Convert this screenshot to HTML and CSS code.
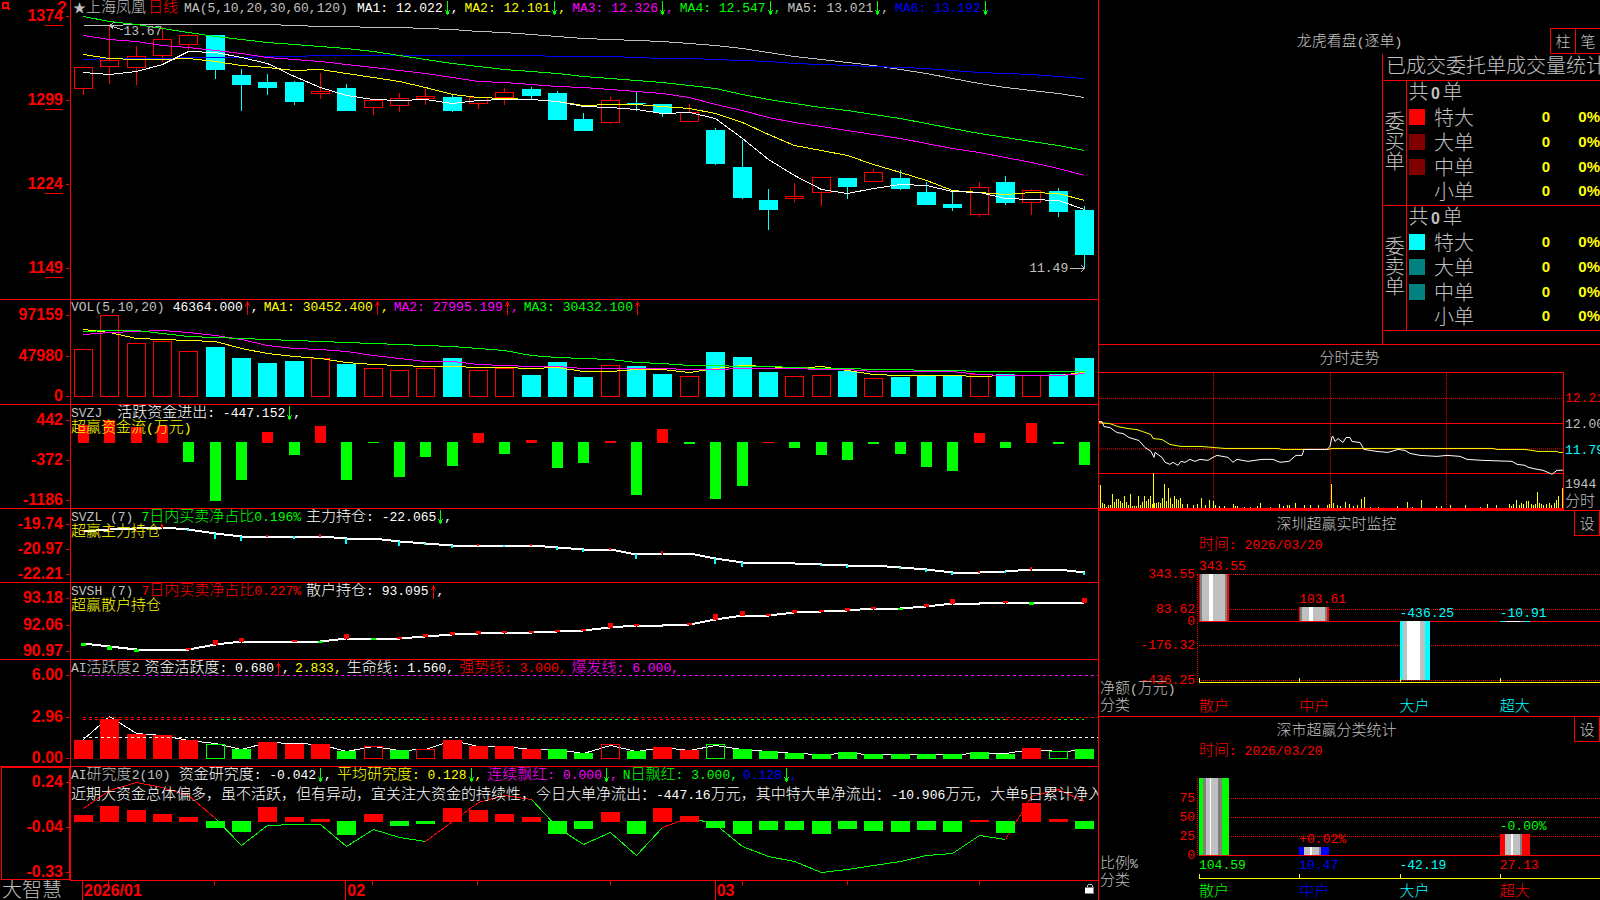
FILE: index.html
```
<!DOCTYPE html>
<html lang="zh-CN">
<head>
	<meta charset="UTF-8">
	<title>上海凤凰 日线 - 大智慧</title>
	<link rel="stylesheet" href="styles.css">
</head>
<body>
	<svg class="defs" width="0" height="0">
		<symbol id="down" viewBox="0 0 8 16"><path d="M4 0h1v14h-1zM3 10h3v1h-3zM2 9h1v1h-1zM6 9h1v1h-1zM3 11h3v2h-3z" fill="#0f0"/></symbol>
		<symbol id="up" viewBox="0 0 8 16"><path d="M4 1h1v14h-1zM3 3h3v2h-3zM2 5h1v1h-1zM6 5h1v1h-1z" fill="#f00"/></symbol>
	</svg>

	<main class="left">
		<section class="panel kline">
			<div class="axis">
				<svg class="mark" viewBox="0 0 8 8"><path d="M0 0h7v6h1v2h-2v-1h-6zM2 2v3h3v-3z" fill="#f00" fill-rule="evenodd"/></svg>
				<b class="ask">?</b>
				<span>13<u>74</u></span><span>12<u>99</u></span><span>12<u>24</u></span><span>11<u>49</u></span>
			</div>
			<div class="plot" id="kline">
				<div class="legend first">
					<span class="s"><i class="star">★</i><i>上海凤凰</i></span><span class="r period"><i>日线</i></span>
					<span class="s name">MA(5,10,20,30,60,120)</span>
					<span class="w">MA1: 12.022<svg><use href="#down"/></svg>,</span>
					<span class="y">MA2: 12.101<svg><use href="#down"/></svg>,</span>
					<span class="m">MA3: 12.326<svg><use href="#down"/></svg>,</span>
					<span class="g">MA4: 12.547<svg><use href="#down"/></svg>,</span>
					<span class="s">MA5: 13.021<svg><use href="#down"/></svg>,</span>
					<span class="b">MA6: 13.192<svg><use href="#down"/></svg></span>
				</div>
				<span class="note high">13.67</span>
				<span class="note low">11.49</span>
			</div>
		</section>

		<section class="panel">
			<div class="axis"><span>97159</span><span>47980</span><span>0</span></div>
			<div class="plot" id="vol">
				<div class="legend">
					<span class="s name">VOL(5,10,20)</span>
					<span class="w">46364.000<svg><use href="#up"/></svg>,</span>
					<span class="y">MA1: 30452.400<svg><use href="#up"/></svg>,</span>
					<span class="m">MA2: 27995.199<svg><use href="#up"/></svg>,</span>
					<span class="g">MA3: 30432.100<svg><use href="#up"/></svg></span>
				</div>
			</div>
		</section>

		<section class="panel">
			<div class="axis"><span>442</span><span>-372</span><span>-1186</span></div>
			<div class="plot" id="svzj">
				<div class="legend">
					<span class="s name wide">SVZJ</span>
					<span class="w"><i>活跃资金进出</i>: -447.152<svg><use href="#down"/></svg>,</span>
				</div>
				<div class="sub y"><i>超赢资金流</i>(<i>万元</i>)</div>
			</div>
		</section>

		<section class="panel">
			<div class="axis"><span>-19.74</span><span>-20.97</span><span>-22.21</span></div>
			<div class="plot" id="svzl">
				<div class="legend">
					<span class="s name">SVZL (7)</span>
					<span class="g">7<i>日内买卖净占比</i>0.196%</span>
					<span class="w"><i>主力持仓</i>: -22.065<svg><use href="#down"/></svg>,</span>
				</div>
				<div class="sub y"><i>超赢主力持仓</i></div>
			</div>
		</section>

		<section class="panel">
			<div class="axis"><span>93.18</span><span>92.06</span><span>90.97</span></div>
			<div class="plot" id="svsh">
				<div class="legend">
					<span class="s name">SVSH (7)</span>
					<span class="r">7<i>日内买卖净占比</i>0.227%</span>
					<span class="w"><i>散户持仓</i>: 93.095<svg><use href="#up"/></svg>,</span>
				</div>
				<div class="sub y"><i>超赢散户持仓</i></div>
			</div>
		</section>

		<section class="panel">
			<div class="axis"><span>6.00</span><span>2.96</span><span>0.00</span></div>
			<div class="plot" id="active">
				<div class="legend">
					<span class="s">AI<i>活跃度</i>2</span>
					<span class="w"><i>资金活跃度</i>: 0.680<svg><use href="#up"/></svg>,</span>
					<span class="y">2.833,</span>
					<span class="w"><i>生命线</i>: 1.560,</span>
					<span class="r"><i>强势线</i>: 3.000,</span>
					<span class="m"><i>爆发线</i>: 6.000,</span>
				</div>
			</div>
		</section>

		<section class="panel">
			<div class="axis current"><span>0.24</span><span>-0.04</span><span>-0.33</span></div>
			<div class="plot" id="study">
				<div class="legend">
					<span class="s name">AI<i>研究度</i>2(10)</span>
					<span class="w"><i>资金研究度</i>: -0.042<svg><use href="#down"/></svg>,</span>
					<span class="y"><i>平均研究度</i>: 0.128<svg><use href="#down"/></svg>,</span>
					<span class="m"><i>连续飘红</i>: 0.000<svg><use href="#down"/></svg>,</span>
					<span class="g">N<i>日飘红</i>: 3.000,</span>
					<span class="b">0.128<svg><use href="#down"/></svg>,</span>
				</div>
				<div class="message w"><i>近期大资金总体偏多，虽不活跃，但有异动，宜关注大资金的持续性，今日大单净流出：</i>-447.16<i>万元，其中特大单净流出：</i>-10.906<i>万元，大单</i>5<i>日累计净入</i></div>
			</div>
		</section>

		<footer class="dates">
			<div class="brand">大智慧</div>
			<div class="plot" id="dates">
				<svg class="lock" viewBox="0 0 10 12"><path d="M2 4v-2h1v-1h4v1h1v2h-1v-2h-4v2z" fill="#c0c0c0"/><path d="M0 5h8v5h-8z" fill="#fff"/><path d="M0 4h9v7h-9v-1h8v-5h-8z" fill="#808080"/></svg>
			</div>
		</footer>
	</main>

	<aside class="right">
		<section class="box orders">
			<h2>龙虎看盘<em>(</em>逐单<em>)</em></h2>
			<div class="tools"><button type="button">柱</button><button type="button">笔</button></div>
			<div class="stats">
				<h3>已成交委托单成交量统计</h3>
				<table>
					<tbody>
						<tr><th rowspan="5" class="side">委买单</th><td colspan="4" class="total">共<b>0</b>单</td></tr>
						<tr><td class="sw"><span class="c1"></span></td><td>特大</td><td class="num">0</td><td class="num">0%</td></tr>
						<tr><td class="sw"><span class="c2"></span></td><td>大单</td><td class="num">0</td><td class="num">0%</td></tr>
						<tr><td class="sw"><span class="c2"></span></td><td>中单</td><td class="num">0</td><td class="num">0%</td></tr>
						<tr><td class="sw"></td><td>小单</td><td class="num">0</td><td class="num">0%</td></tr>
					</tbody>
					<tbody>
						<tr><th rowspan="5" class="side">委卖单</th><td colspan="4" class="total">共<b>0</b>单</td></tr>
						<tr><td class="sw"><span class="c3"></span></td><td>特大</td><td class="num">0</td><td class="num">0%</td></tr>
						<tr><td class="sw"><span class="c4"></span></td><td>大单</td><td class="num">0</td><td class="num">0%</td></tr>
						<tr><td class="sw"><span class="c4"></span></td><td>中单</td><td class="num">0</td><td class="num">0%</td></tr>
						<tr><td class="sw"></td><td>小单</td><td class="num">0</td><td class="num">0%</td></tr>
					</tbody>
				</table>
			</div>
		</section>

		<section class="box intraday">
			<h2>分时走势</h2>
			<div class="trend">
				<div class="plot" id="trend"></div>
				<div class="prices">
					<span class="r">12.21</span><span class="s">12.00</span><span class="c">11.79</span>
					<span class="s last">1944</span><span class="s"><i>分时</i></span>
				</div>
			</div>
		</section>

		<section class="box monitor">
			<header><h2>深圳超赢实时监控</h2><button type="button">设</button></header>
			<p class="time"><i>时间</i>: 2026/03/20</p>
			<div class="chart" id="monitor"></div>
			<div class="foot">
				<div class="labels"><i>净额</i>(<i>万元</i>)<br><i>分类</i></div>
				<ul class="cats">
					<li class="r">散户</li><li class="r">中户</li><li class="c">大户</li><li class="c">超大</li>
				</ul>
			</div>
		</section>

		<section class="box ratio">
			<header><h2>深市超赢分类统计</h2><button type="button">设</button></header>
			<p class="time"><i>时间</i>: 2026/03/20</p>
			<div class="chart" id="ratio"></div>
			<div class="foot">
				<div class="labels"><i>比例</i>%<br><i>分类</i></div>
				<div class="rows">
					<ul class="values">
						<li class="g">104.59</li><li class="b">10.47</li><li class="c">-42.19</li><li class="r">27.13</li>
					</ul>
					<ul class="cats">
						<li class="g">散户</li><li class="b">中户</li><li class="c">大户</li><li class="r">超大</li>
					</ul>
				</div>
			</div>
		</section>
	</aside>
	<script src="script.js"></script>
</body>
</html>
```
FILE: styles.css
```
*{margin:0;padding:0;box-sizing:border-box;}
html,body{height:100%;}
body{
	display:grid;
	grid-template-columns:1099fr 501fr;
	min-height:600px;
	overflow:hidden;
	background:#000;
	color:#c0c0c0;
	font:13px/16px "Liberation Mono","Noto Sans CJK SC",monospace;
}
i{
	font-family:"Noto Sans CJK SC",sans-serif;
	font-size:15px;
	line-height:12px;
	font-style:normal;
	font-weight:300;
}
h2,h3{font-weight:300;font-family:"Noto Sans CJK SC",sans-serif;}
h2{height:26px;font-size:15px;line-height:24px;text-align:center;}
em{font-style:normal;font-size:13px;line-height:1;font-family:"Liberation Mono",monospace;}
ul{list-style:none;}
button{
	width:26px;
	height:26px;
	background:#000;
	border:1px solid #f00;
	color:#c0c0c0;
	font:300 15px/20px "Noto Sans CJK SC",sans-serif;
}
.defs{position:absolute;}
.w{color:#fff;}
.y{color:#ff0;}
.m{color:#f0f;}
.g{color:#0f0;}
.b{color:#00f;}
.r{color:#f00;}
.c{color:#0ff;}
.s{color:#c0c0c0;}

/* left column */
.left{
	display:grid;
	grid-template-columns:minmax(0,1fr);
	grid-template-rows:299fr 105fr 104fr 74fr 77fr 107fr 114fr 20fr;
	min-width:0;
	min-height:0;
	border-right:1px solid #f00;
}
.panel{
	display:flex;
	min-height:0;
	border-top:1px solid #f00;
}
.kline{border-top:0;}
.axis{
	position:relative;
	display:flex;
	flex-direction:column;
	justify-content:space-between;
	flex:none;
	width:71px;
	padding-top:7px;
	padding-right:7px;
	border-right:1px solid #f00;
	color:#f00;
	font:bold 16px/16px "Liberation Sans",sans-serif;
	text-align:right;
}
.kline .axis{padding-top:8px;padding-bottom:23px;}
.axis span{position:relative;}
.axis span:after{
	content:"";
	position:absolute;
	right:-6px;
	top:8px;
	width:3px;
	height:1px;
	background:#f00;
}
.axis u{
	display:inline-block;
	height:18px;
	text-decoration:none;
	border-bottom:1px solid #f00;
}
.kline .axis span{height:16px;}
.current:before{
	content:"";
	position:absolute;
	left:1px;
	right:0;
	top:0;
	bottom:0;
	border:1px solid #f00;
}
.mark{position:absolute;left:2px;top:2px;width:8px;height:8px;}
.ask{position:absolute;left:57px;top:0;}
.plot{
	position:relative;
	flex:1;
	min-width:0;
	overflow:hidden;
}
.draw{
	position:absolute;
	left:0;
	top:0;
	width:100%;
	height:100%;
	shape-rendering:crispEdges;
}
.legend{
	position:relative;
	display:flex;
	align-items:baseline;
	gap:5px;
	height:15px;
	white-space:pre;
}
.first{gap:6px;height:16px;padding-left:2px;}
.legend svg{width:8px;height:16px;vertical-align:bottom;}
.star{font-size:13px;}
.period{margin-left:-4px;}
.name{margin-right:3px;}
.wide{margin-right:10px;}
.sub,.message{
	position:relative;
	height:16px;
	white-space:nowrap;
}
.message{margin-top:5px;}
.note{position:absolute;}
.high{left:5.1%;top:8%;}
.low{right:2.9%;top:87.4%;}
.dates{
	display:flex;
	min-height:0;
	color:#f00;
	font:bold 16px/20px "Liberation Sans",sans-serif;
}
.dates .plot{border-top:1px solid #f00;}
.dates .plot span{position:absolute;top:0;}
.brand{
	flex:none;
	width:70px;
	padding-left:2px;
	color:#c0c0c0;
	font:300 20px/18px "Noto Sans CJK SC",sans-serif;
}
.lock{position:absolute;right:3px;top:2px;width:10px;height:12px;}

/* right column */
.right{
	display:grid;
	grid-template-columns:minmax(0,1fr);
	grid-template-rows:344fr 166fr 206fr 184fr;
	min-width:0;
	min-height:0;
	overflow:hidden;
}
.box{
	position:relative;
	display:flex;
	flex-direction:column;
	min-width:0;
	min-height:0;
	overflow:hidden;
	border-top:1px solid #f00;
}
.orders{border-top:0;padding-top:28px;}
.tools{position:absolute;right:-1px;top:28px;display:flex;}
.tools button + button{margin-left:-1px;}
.stats{
	flex:1;
	align-self:flex-end;
	width:218px;
	padding-left:1px;
	border-left:1px solid #f00;
}
h3{
	height:26px;
	padding-left:2px;
	font-size:20px;
	line-height:22px;
	white-space:nowrap;
}
table{
	width:100%;
	border-collapse:collapse;
	font:300 20px/20px "Noto Sans CJK SC",sans-serif;
}
tbody{border-top:1px solid #f00;border-bottom:1px solid #f00;}
td{height:25px;padding-bottom:3px;line-height:20px;white-space:nowrap;}
.side{
	width:22px;
	padding-bottom:4px;
	border-right:1px solid #f00;
	font-weight:300;
	text-align:center;
	white-space:normal;
}
.total{padding-left:2px;}
.total b{
	display:inline-block;
	width:14px;
	font:bold 16px/16px "Liberation Sans",sans-serif;
	text-align:center;
}
.sw{width:28px;padding-left:2px;}
.sw span{display:block;width:16px;height:16px;}
.c1{background:#f00;}
.c2{background:#800000;}
.c3{background:#0ff;}
.c4{background:#008080;}
.num{
	width:50px;
	color:#ff0;
	font:bold 15px/20px "Liberation Sans",sans-serif;
	text-align:right;
}
.trend{
	display:flex;
	flex:1;
	min-height:0;
}
.intraday h2{height:27px;}
.trend .plot{border:1px solid #f00;border-left:0;border-bottom-width:2px;}
.prices{
	display:flex;
	flex-direction:column;
	gap:10px;
	width:36px;
	padding:19px 0 0 1px;
	overflow:hidden;
}
.prices .last{margin:8px 0 -9px;}
.box header{display:flex;}
.box header h2{flex:1;}
.box header button{margin:-1px 0;}
.time{
	flex:none;
	height:37px;
	padding-left:100px;
	color:#f00;
}
.chart{
	position:relative;
	flex:1;
	display:grid;
	grid-template-columns:repeat(4,1fr);
	min-height:0;
	margin-left:100px;
	border-bottom:1px solid #ff0;
}
.chart:before{
	content:"";
	position:absolute;
	left:-2px;
	top:0;
	height:100%;
	border-left:1px dotted #f00;
}
.grid{
	position:absolute;
	left:0;
	right:0;
	border-top:1px dotted #f00;
}
.zero{border-top-style:solid;}
.tick{
	position:absolute;
	right:100%;
	margin:-7px 4px 0 0;
	color:#f00;
}
.slot{position:relative;}
.bar{position:absolute;left:0;width:30px;}
.value{position:absolute;left:0;margin-top:-15px;}
.foot{display:flex;flex:none;}
.labels{
	flex:none;
	width:100px;
	padding-left:1px;
	line-height:17px;
}
.monitor .foot{height:33px;}
.monitor .labels{margin-top:-2px;position:relative;}
.ratio .time{height:35px;}
.ratio .foot{height:44px;}
.ratio .chart{border-bottom-color:#f00;}
.rows{flex:1;}
.foot ul{
	flex:1;
	display:grid;
	grid-template-columns:repeat(4,1fr);
}
.cats li{
	position:relative;
	padding-top:14px;
	font:300 15px/16px "Noto Sans CJK SC",sans-serif;
}
.values{padding:2px 0 4px;}
.rows .cats{border-top:1px solid #ff0;}
.rows .cats li{padding-top:3px;}
.cats li:before{
	content:"";
	position:absolute;
	left:0;
	top:-5px;
	height:5px;
	border-left:1px solid #ff0;
}
```
FILE: script.js
```
var RED = '#f00', GREEN = '#0f0', CYAN = '#0ff', YELLOW = '#ff0', PINK = '#f0f', WHITE = '#fff', GREY = '#c0c0c0', BLUE = '#00f';
var NS = 'http://www.w3.org/2000/svg';

// one svg per panel, drawn below the texts
function board(id, top, w, h){
	var svg = document.createElementNS(NS, 'svg');
	var box = document.getElementById(id);
	svg.setAttribute('class', 'draw');
	svg.setAttribute('viewBox', '0 ' + top + ' ' + w + ' ' + h);
	svg.setAttribute('preserveAspectRatio', 'none');
	box.insertBefore(svg, box.firstChild);
	return svg;
}
function add(svg, tag, attrs){
	var el = document.createElementNS(NS, tag);
	for(var k in attrs){
		el.setAttribute(k, attrs[k]);
	}
	svg.appendChild(el);
}
function cx(i){
	return Math.round(12 + i * 26.34);
}
function fill(svg, x, y, w, h, color){
	add(svg, 'rect', {x:x, y:y, width:w, height:h, fill:color});
}
function hollow(svg, x, y, w, h, color){
	add(svg, 'rect', {x:x + 0.5, y:y + 0.5, width:w - 1, height:h, fill:'none', stroke:color});
}
function path(svg, pts, color, width, dash){
	var attrs = {points:pts.join(' '), fill:'none', stroke:color, 'stroke-width':width || 1};
	if(dash) attrs['stroke-dasharray'] = dash;
	add(svg, 'polyline', attrs);
}
function line(svg, ys, color, width, from, to){
	var pts = [];
	for(var i = from || 0; i <= (to || ys.length - 1); i++){
		pts.push((cx(i) + 0.5) + ',' + (ys[i] + 0.5));
	}
	path(svg, pts, color, width);
}

// [up, high, top, bottom, low]
var candles = [
	[1,67,67,88,95],[1,25,60,66,84],[1,46,56,67,85],[1,27,39,55,62],[1,34,35,44,50],[0,35,35,70,79],
	[0,69,75,85,111],[0,74,82,88,95],[0,81,82,102,105],[1,73,91,93,99],[0,84,88,111,111],[1,99,100,107,115],
	[1,93,98,105,112],[1,89,96,98,105],[0,95,97,111,112],[1,97,97,103,109],[1,88,92,97,105],[0,87,89,96,99],
	[0,91,93,120,120],[0,113,119,131,131],[1,97,100,122,124],[0,92,103,104,111],[0,104,104,113,117],[1,104,112,121,121],
	[0,128,130,164,165],[0,140,167,198,199],[0,189,200,210,230],[1,183,196,198,202],[1,177,177,192,206],[0,178,178,187,199],
	[1,169,172,181,181],[0,170,178,189,190],[0,182,192,205,205],[0,191,204,208,211],[1,182,187,214,217],[0,176,182,203,205],
	[1,189,190,202,215],[0,188,191,212,217],[0,206,210,255,268]
];
var svg = board('kline', 0, 1027, 299);
candles.forEach(function(c, i){
	var x = cx(i);
	if(c[0]){
		fill(svg, x, c[1], 1, c[2] - c[1], RED);
		fill(svg, x, c[3], 1, c[4] - c[3], RED);
		hollow(svg, x - 9, c[2], 19, c[3] - c[2], RED);
	}else{
		fill(svg, x, c[1], 1, c[4] - c[1], CYAN);
		fill(svg, x - 9, c[2], 19, c[3] - c[2], CYAN);
	}
});
line(svg, [25,25,24,24,24,24,24,24,25,26,26,27,27,28,29,31,32,34,36,38,39,40,41,43,45,48,52,56,59,62,65,69,73,78,83,87,90,93,97], GREY);
line(svg, [59,58,58,58,57,57,57,56,56,55,55,55,55,55,55,55,55,55,56,56,56,57,58,58,59,60,61,63,64,65,66,67,68,70,72,73,74,76,78], BLUE);
line(svg, [16,21,24,28,32,36,39,42,44,46,48,51,55,59,63,66,69,71,73,76,78,80,82,85,88,94,99,103,107,110,114,118,123,128,133,137,141,145,150], GREEN);
line(svg, [35,39,41,45,47,50,53,57,59,61,64,67,70,73,77,81,82,84,86,87,89,91,93,97,104,110,117,122,126,130,134,138,143,148,152,157,162,168,175], PINK);
line(svg, [54,58,59,59,58,61,65,67,70,69,73,77,81,87,94,97,98,99,101,105,104,104,106,108,113,122,134,145,150,155,164,172,180,190,192,194,192,193,200], YELLOW);
line(svg, [72,74,71,64,51,52,57,63,76,87,95,99,100,99,103,100,99,99,101,106,107,109,113,112,118,138,159,175,189,193,188,184,185,191,192,198,199,200,209], WHITE);
path(svg, ['52,30', '39,25.5', '43,22'], GREY);
path(svg, ['39,25', '42,29'], GREY);
path(svg, ['999,268.5', '1013,268.5'], GREY);
path(svg, ['1010,265', '1013.5,268.5', '1010,272'], GREY);

// volume
svg = board('vol', 300, 1027, 104);
[349,315,343,341,351,347,358,363,361,358,364,368,370,368,358,370,368,375,362,377,365,366,374,376,352,357,372,376,375,371,378,377,376,376,374,374,375,374,358].forEach(function(y, i){
	if(candles[i][0]) hollow(svg, cx(i) - 9, y, 19, 396 - y, RED);
	else fill(svg, cx(i) - 9, y, 19, 397 - y, CYAN);
});
line(svg, [329,332,338,339,340,341,348,353,356,358,362,364,365,366,366,367,367,368,367,371,371,369,369,372,368,365,366,368,366,370,374,375,375,375,376,375,375,375,372], YELLOW);
line(svg, [334,332,331,330,332,335,339,345,348,349,351,355,358,361,361,364,365,366,366,368,368,368,368,369,369,368,368,368,369,369,371,371,371,371,374,375,375,375,373], PINK);
line(svg, [331,330,330,333,336,337,338,339,340,341,342,343,344,345,346,348,350,355,357,358,359,362,363,365,365,366,366,367,368,368,369,369,370,370,371,371,371,371,371], GREEN);

// money flow
svg = board('svzj', 405, 1027, 103);
[425,420,427,426,462,501,480,432,455,426,480,443,477,457,466,433,454,440,468,463,441,495,429,444,499,486,442,448,455,460,444,454,467,471,433,448,423,444,465].forEach(function(y, i){
	if(y <= 442) fill(svg, cx(i) - 5, y, 11, 443 - y, RED);
	else fill(svg, cx(i) - 5, 442, 11, y - 442, GREEN);
});

// holdings: a line with small marks, plus is up
function holding(id, top, h, ys, marks, w, down){
	var svg = board(id, top, 1027, h);
	line(svg, ys, WHITE, 2);
	marks.forEach(function(m, i){
		var x = cx(i) - Math.floor(w / 2);
		if(m > 0) fill(svg, x, ys[i] - m, w, m + 1, RED);
		if(m < 0) fill(svg, x, ys[i], w, 1 - m, down);
	});
}
holding('svzl', 509, 73,
	[531,529,528,527,529,533,536,536,536,536,538,538,541,543,545,545,545,545,547,549,549,554,553,553,558,562,562,563,564,565,565,567,569,572,572,571,569,569,572],
	[1,2,1,3,-1,-5,-4,1,-2,2,-5,0,-4,-1,-2,1,-1,1,-2,-2,1,-4,2,0,-5,-4,0,0,-1,-2,0,-1,-2,-2,1,-1,2,0,-2], 2, CYAN);
holding('svsh', 583, 76,
	[643,646,649,649,649,644,641,641,641,641,638,638,638,636,634,633,632,632,631,630,627,625,625,624,619,615,615,612,611,610,608,608,606,603,603,602,602,603,602],
	[-2,-3,-2,0,1,4,3,0,1,-1,4,-1,1,2,2,2,1,1,1,1,4,1,0,1,5,4,1,2,1,2,1,-1,2,4,0,1,-2,0,4], 5, GREEN);

// activity, lower case is hollow
svg = board('active', 660, 1027, 106);
line(svg, [739,716,733,735,740,743,749,742,743,744,751,746,750,749,740,746,746,749,749,753,745,751,747,750,745,749,751,753,754,753,754,754,754,754,753,753,749,751,750], WHITE);
var kind = 'RRRRRgGRRRGrGrRRRRGGrGRRgGGGGGGGGGGGRgG';
[740,719,734,735,740,744,749,742,744,744,751,746,750,749,740,746,746,749,749,753,744,751,747,750,744,749,751,753,754,752,754,754,754,754,752,754,748,751,749].forEach(function(y, i){
	var color = kind[i].toUpperCase() == 'R' ? RED : GREEN;
	if(kind[i] == 'r' || kind[i] == 'g') hollow(svg, cx(i) - 9, y, 19, 758 - y, color);
	else fill(svg, cx(i) - 9, y, 19, 759 - y, color);
});
path(svg, ['12,675.5', '1027,675.5'], PINK, 1, '3 3');
path(svg, ['12,717.5', '1027,717.5'], RED, 1, '3 3');
path(svg, ['12,737.5', '1027,737.5'], WHITE, 1, '3 3');
[[0,5,RED],[5,6,GREEN],[6,9,RED],[9,13,GREEN],[13,17,RED],[17,21,GREEN],[21,24,RED],[24,35,GREEN],[35,37,RED],[37,38,GREEN]].forEach(function(s){
	path(svg, [cx(s[0]) + ',719.5', cx(s[1]) + ',719.5'], s[2], 1, '3 3');
});

// study
svg = board('study', 767, 1027, 113);
var study = [808,790,782,787,795,818,845,825,824,824,846,829,837,841,821,802,795,799,827,844,832,855,827,817,824,846,856,861,872,869,865,861,855,853,835,839,796,789,801];
[[0,5,RED],[5,13,GREEN],[13,17,RED],[17,22,GREEN],[22,23,RED],[23,35,GREEN],[35,38,RED]].forEach(function(s){
	line(svg, study, s[2], 1, s[0], s[1]);
});
[815,806,810,814,817,828,832,807,817,819,835,814,826,824,808,810,814,817,834,829,812,834,808,816,828,834,830,830,834,829,831,832,830,832,820,833,803,819,829].forEach(function(y, i){
	if(y < 821) fill(svg, cx(i) - 9, y, 19, 822 - y, RED);
	else fill(svg, cx(i) - 9, 821, 19, y - 821, GREEN);
});

// dates
svg = board('dates', 0, 1027, 19);
[1,5,11,15,20,25,29,34].forEach(function(i){
	fill(svg, cx(i), 0, 1, 4, RED);
});
[[0,'2026/01'],[10,'02'],[24,'03']].forEach(function(d){
	var s = document.createElement('span');
	fill(svg, cx(d[0]), 0, 1, 19, RED);
	s.textContent = d[1];
	s.style.left = (cx(d[0]) + 2) / 1027 * 100 + '%';
	document.getElementById('dates').appendChild(s);
});

// intraday trend
svg = board('trend', 0, 464, 136);
[25,76].forEach(function(y){
	path(svg, ['0,' + (y + 0.5), '464,' + (y + 0.5)], RED, 1, '1 1');
});
[50,101].forEach(function(y){
	fill(svg, 0, y, 464, 1, RED);
});
[114,231,347].forEach(function(x){
	path(svg, [(x + 0.5) + ',0', (x + 0.5) + ',136'], RED, 1, '1 1');
});
var ticks = [[54,35],[88,4],[94,3],[98,4],[102,10],[106,3],[110,8],[114,7],[116,3],[120,2],[125,2],[134,4],[136,2],[138,2],[145,1],[151,1],[158,2],[161,5],[171,1],[180,4],[184,2],[188,3],[190,3],[196,5],[205,3],[211,3],[219,3],[228,3],[230,4],[232,24],[234,5],[238,3],[241,2],[246,6],[250,4],[254,2],[258,3],[262,9],[265,11],[271,1],[279,1],[298,2],[308,6],[313,1],[322,8],[337,2],[342,2],[351,3],[366,3],[381,1],[388,4],[397,3],[410,4],[412,2],[414,4],[417,8],[420,3],[422,5],[424,4],[427,7],[429,7],[432,4],[434,3],[436,4],[438,16],[440,5],[442,4],[444,3],[447,4],[450,5],[452,3],[455,5],[457,8],[459,12],[463,20]];
[23,5,4,1,3,3,14,6,9,9,7,5,12,6,3,14,2,2,2,12,3,6,12,7,9,12,4,5,5,6,5,10,24,7,20,10,4,12,9,8,10,4].forEach(function(h, i){
	ticks.push([i * 2 + 1, h]);
});
ticks.forEach(function(t){
	fill(svg, t[0], 136 - t[1], 1, t[1], YELLOW);
});
path(svg, '0,50 11,51 19,54 29,56 38,57 52,62 54,66 63,67 71,72 82,74 102,74 114,75 126,76 179,76 183,77 229,77 233,76 394,76 398,77 426,77 439,79 458,79 460,80 464,80'.split(' '), YELLOW);
path(svg, '0,49 3,49 5,54 11,55 18,60 24,61 30,65 40,68 46,75 52,79 55,85 56,80 63,85 66,90 71,92 74,90 79,93 82,89 86,90 91,87 96,89 101,87 109,88 114,85 118,83 129,85 134,90 138,87 149,89 163,87 174,87 181,90 190,89 197,83 203,83 205,77 228,77 231,74 233,64 234,64 236,69 239,66 244,70 247,65 251,65 253,69 261,70 265,77 278,79 289,80 299,77 306,78 311,81 321,83 338,84 348,83 361,84 368,87 383,88 413,89 418,92 426,93 429,95 438,97 444,98 453,102 458,98 464,98'.split(' '), WHITE);

// bar charts on the right
function stripes(list){
	var at = 0;
	return 'linear-gradient(90deg,' + list.map(function(s){
		var from = at;
		at += s[1];
		return s[0] + ' ' + from + 'px ' + at + 'px';
	}).join(',') + ')';
}
function div(parent, cls, top, text){
	var el = document.createElement('div');
	el.className = cls;
	el.style.top = top + '%';
	if(text) el.textContent = text;
	parent.appendChild(el);
	return el;
}
function bars(id, max, min, grid, data){
	var box = document.getElementById(id);
	function pos(v){
		return Math.max(0, (max - v) / (max - min) * 100);
	}
	grid.forEach(function(v){
		if(v != 0 || min < 0) div(box, v == 0 ? 'grid zero' : 'grid', pos(v));
		div(box, 'tick', pos(v), String(v));
	});
	data.forEach(function(d){
		var slot = document.createElement('div');
		var top = pos(Math.max(d.v, 0));
		slot.className = 'slot';
		box.appendChild(slot);
		if(d.fill){
			var bar = div(slot, 'bar', top);
			bar.style.height = Math.abs(pos(d.v) - pos(0)) + '%';
			bar.style.background = stripes(d.fill);
		}
		if(d.label) div(slot, 'value ' + d.cls, top, d.label);
	});
}
var DARK = '#808080';
bars('monitor', 343.55, -451, [343.55, 83.62, 0, -176.32, -436.25], [
	{v:343.55, label:'343.55', cls:'r', fill:[[RED,1],[DARK,2],[GREY,7],[WHITE,4],[GREY,12],[DARK,2],[RED,2]]},
	{v:103.61, label:'103.61', cls:'r', fill:[[RED,1],[DARK,2],[GREY,7],[WHITE,4],[GREY,12],[DARK,2],[RED,2]]},
	{v:-436.25, label:'-436.25', cls:'c', fill:[[CYAN,3],[GREY,4],[WHITE,13],[GREY,5],[CYAN,5]]},
	{v:-10.91, label:'-10.91', cls:'c', fill:[[CYAN,3],[GREY,4],[WHITE,13],[GREY,5],[CYAN,5]]}
]);
bars('ratio', 101, 0, [75, 50, 25, 0], [
	{v:104.59, fill:[[GREEN,4],[DARK,3],[GREY,4],[WHITE,1],[GREY,7],[DARK,4],[GREEN,7]]},
	{v:10.47, label:'+0.02%', cls:'r', fill:[[BLUE,5],[GREY,6],[WHITE,2],[GREY,7],[DARK,2],[BLUE,8]]},
	{v:-42.19},
	{v:27.13, label:'-0.00%', cls:'g', fill:[[RED,5],[GREY,6],[WHITE,2],[GREY,7],[DARK,2],[RED,8]]}
]);
```
